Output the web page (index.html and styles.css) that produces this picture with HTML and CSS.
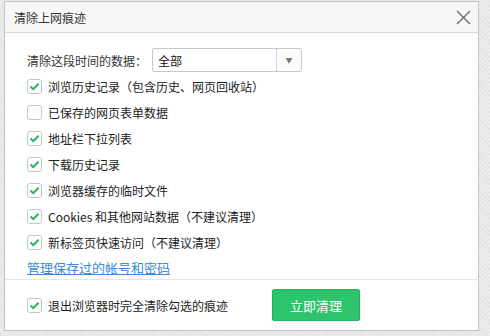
FILE: index.html
```html
<!DOCTYPE html>
<html lang="zh-CN">
<head>
  <meta charset="UTF-8">
  <title>清除上网痕迹</title>
  <link rel="stylesheet" href="styles.css">
</head>
<body>

  <div class="dialog">
    <div class="dialog-header">
      <span class="dialog-title">清除上网痕迹</span>
      <button class="close-btn">
        <svg width="15" height="15" viewBox="0 0 15 15"><path d="M1 1 L14 14 M14 1 L1 14" stroke="#666" stroke-width="1.3" fill="none"/></svg>
      </button>
    </div>

    <div class="dialog-body">
      <div class="range-row">
        <span class="range-label">清除这段时间的数据：</span>
        <div class="select-box">
          <span class="select-value">全部</span>
          <span class="select-arrow">&#9660;</span>
        </div>
      </div>

      <label class="check-row"><span class="check on"></span>浏览历史记录（包含历史、网页回收站）</label>
      <label class="check-row"><span class="check"></span>已保存的网页表单数据</label>
      <label class="check-row"><span class="check on"></span>地址栏下拉列表</label>
      <label class="check-row"><span class="check on"></span>下载历史记录</label>
      <label class="check-row"><span class="check on"></span>浏览器缓存的临时文件</label>
      <label class="check-row"><span class="check on"></span>Cookies 和其他网站数据（不建议清理）</label>
      <label class="check-row"><span class="check on"></span>新标签页快速访问（不建议清理）</label>

      <div class="link-row"><a href="#">管理保存过的帐号和密码</a></div>
    </div>

    <div class="dialog-footer">
      <label class="check-row"><span class="check on"></span>退出浏览器时完全清除勾选的痕迹</label>
      <button class="clear-btn">立即清理</button>
    </div>
  </div>

</body>
</html>
```

FILE: styles.css
```css
body {
  margin: 0;
  height: 336px;
  overflow: hidden;
  font-family: "Noto Sans CJK SC", "Liberation Sans", sans-serif;
  font-size: 12px;
  color: #333;
  text-spacing-trim: space-all;
  background-color: #ececec;
  background-image: repeating-linear-gradient(45deg, #e2e2e2 0, #e2e2e2 1px, transparent 1px, transparent 3px);
}

.dialog {
  margin: 1px 0 0 4px;
  width: 473px;
  height: 328px;
  background-color: white;
  border: 1px solid #c4c4c4;
  display: flex;
  flex-direction: column;
}

.dialog-header {
  height: 30px;
  background-color: #f7f7f7;
  border-bottom: 1px solid #d6d6d6;
  display: flex;
  justify-content: space-between;
  align-items: center;
  padding: 0 7px 0 9px;
}

.dialog-title {
  font-size: 12px;
  color: #333;
}

.close-btn {
  background: transparent;
  border: none;
  padding: 0;
  width: 15px;
  height: 15px;
  display: flex;
  cursor: pointer;
}

.dialog-body {
  height: 246px;
  padding: 15px 0 0 22px;
  box-sizing: border-box;
  overflow: hidden;
  display: flex;
  flex-direction: column;
}

.range-row {
  display: flex;
  align-items: center;
  height: 24px;
  margin-bottom: 1px;
}

.range-label {
  width: 125px;
}

.select-box {
  width: 148px;
  height: 22px;
  border: 1px solid #c8c8c8;
  border-radius: 2px;
  display: flex;
  align-items: stretch;
}

.select-value {
  flex: 1;
  padding-left: 5px;
  display: flex;
  align-items: center;
  color: #111;
}

.select-arrow {
  width: 24px;
  border-left: 1px solid #d8d8d8;
  background-color: #fafafa;
  color: #777;
  font-size: 7px;
  display: flex;
  align-items: center;
  justify-content: center;
}

.check-row {
  height: 26px;
  display: flex;
  align-items: center;
  gap: 6px;
  color: #222;
}

.check {
  width: 13px;
  height: 13px;
  border: 1px solid #c6c6c6;
  border-radius: 3px;
  background-color: white;
  display: inline-block;
  flex-shrink: 0;
}

.check.on {
  background-image: url("data:image/svg+xml,%3Csvg xmlns='http://www.w3.org/2000/svg' width='13' height='13' viewBox='0 0 13 13'%3E%3Cpath d='M2.5 6.5 L5.3 9.2 L10.5 3.8' stroke='%2328b45a' stroke-width='2' fill='none'/%3E%3C/svg%3E");
}

.link-row {
  height: 24px;
  display: flex;
  align-items: center;
}

.link-row a {
  color: #3b8ad9;
  font-size: 13px;
  text-decoration: underline;
}

.dialog-footer {
  flex: 1;
  border-top: 1px solid #e4e4e4;
  display: grid;
  grid-template-columns: 245px auto;
  align-items: center;
  padding-left: 22px;
}

.clear-btn {
  width: 88px;
  height: 32px;
  background-color: #2ec46e;
  border: 1px solid #27b262;
  border-radius: 2px;
  color: white;
  font-family: "Noto Sans CJK SC", sans-serif;
  font-size: 13px;
  cursor: pointer;
}
```
